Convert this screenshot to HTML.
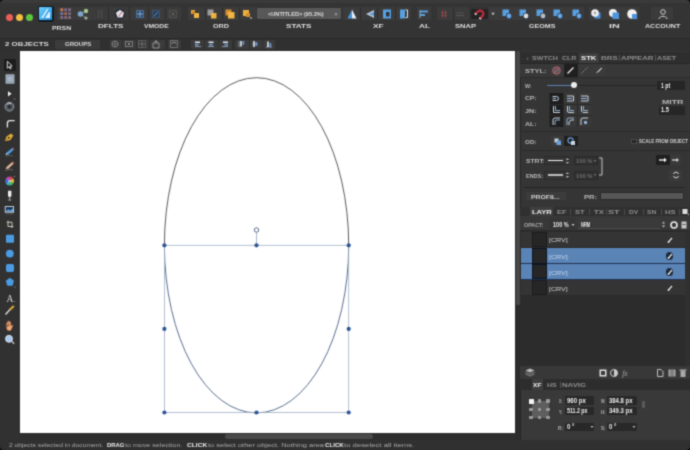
<!DOCTYPE html>
<html><head><meta charset="utf-8">
<style>
*{margin:0;padding:0;box-sizing:border-box}
html,body{width:690px;height:450px;overflow:hidden;background:#2f2f2f;font-family:"Liberation Sans",sans-serif;color:#ddd;position:relative}
.a{position:absolute}
.t{position:absolute;white-space:nowrap;line-height:1}
</style></head><body>

<svg width="0" height="0" style="position:absolute"><filter id="bl" x="0" y="0" width="100%" height="100%" color-interpolation-filters="sRGB"><feConvolveMatrix order="3" kernelMatrix="0.03240 0.11520 0.03240 0.11520 0.40960 0.11520 0.03240 0.11520 0.03240" edgeMode="duplicate" preserveAlpha="true"/></filter></svg>
<div id="wrap" style="position:absolute;left:0;top:0;width:690px;height:450px;overflow:hidden;filter:url(#bl)">
<div class="a" style="left:0px;top:0px;width:690px;height:38px;background:#343434;"></div>
<div class="a" style="left:0px;top:38px;width:690px;height:1px;background:#292929;"></div>
<div class="a" style="left:0px;top:39px;width:690px;height:12px;background:#303030;"></div>
<div class="a" style="left:0px;top:0px;width:690px;height:2.5px;background:#3a3a3a;"></div>
<div class="a" style="left:56.9px;top:7.3px;width:35.00000000000001px;height:12.3px;background:#3b3b3b;border-radius:1px"></div>
<div class="a" style="left:90.8px;top:7.3px;width:37.7px;height:12.3px;background:#3b3b3b;border-radius:1px"></div>
<div class="a" style="left:131.4px;top:7.3px;width:50.0px;height:12.3px;background:#3b3b3b;border-radius:1px"></div>
<div class="a" style="left:188px;top:7.3px;width:68px;height:12.3px;background:#3b3b3b;border-radius:1px"></div>
<div class="a" style="left:342.5px;top:7.3px;width:68.5px;height:12.3px;background:#3b3b3b;border-radius:1px"></div>
<div class="a" style="left:416.5px;top:7.3px;width:14.699999999999989px;height:12.3px;background:#3b3b3b;border-radius:1px"></div>
<div class="a" style="left:437px;top:7.3px;width:31.5px;height:12.3px;background:#3b3b3b;border-radius:1px"></div>
<div class="a" style="left:488.5px;top:7.3px;width:11.5px;height:12.3px;background:#3b3b3b;border-radius:1px"></div>
<div class="a" style="left:497px;top:7.3px;width:86.60000000000002px;height:12.3px;background:#3b3b3b;border-radius:1px"></div>
<div class="a" style="left:588.7px;top:7.3px;width:50.799999999999955px;height:12.3px;background:#3b3b3b;border-radius:1px"></div>
<div class="a" style="left:651px;top:7.3px;width:22px;height:12.3px;background:#3b3b3b;border-radius:1px"></div>
<div class="a" style="left:6.1px;top:13.5px;width:7px;height:7px;border-radius:50%;background:#ec5f58"></div>
<div class="a" style="left:16.1px;top:13.5px;width:7px;height:7px;border-radius:50%;background:#f4be41"></div>
<div class="a" style="left:25.9px;top:13.5px;width:7px;height:7px;border-radius:50%;background:#5ec73f"></div>
<div class="a" style="left:37.6px;top:5.6px;width:16.2px;height:16.2px;background:#141b24;border-radius:2px"></div>
<svg class="a" style="left:39px;top:7px;" width="13" height="13" viewBox="0 0 13 13"><defs><linearGradient id="ag" x1="0" y1="0" x2="1" y2="1"><stop offset="0" stop-color="#6fd0fb"/><stop offset="1" stop-color="#1f8fe3"/></linearGradient></defs><rect width="13" height="13" rx="1" fill="url(#ag)"/><path d="M2,11L8,2L9.5,2L4,11Z M6,11L10,5L11,5L11,11Z" fill="#fff" opacity="0.85"/></svg>
<svg class="a" style="left:60.4px;top:8.1px;" width="12" height="12" viewBox="0 0 12 12"><rect x="0.3" y="0.3" width="2.9" height="2.9" rx="0.5" fill="#c97a4a"/><rect x="4.2" y="0.3" width="2.9" height="2.9" rx="0.5" fill="#7e6a86"/><rect x="8.1" y="0.3" width="2.9" height="2.9" rx="0.5" fill="#7e6a86"/><rect x="0.3" y="4.2" width="2.9" height="2.9" rx="0.5" fill="#6f7aa6"/><rect x="4.2" y="4.2" width="2.9" height="2.9" rx="0.5" fill="#a86a5a"/><rect x="8.1" y="4.2" width="2.9" height="2.9" rx="0.5" fill="#7e6a86"/><rect x="0.3" y="8.1" width="2.9" height="2.9" rx="0.5" fill="#7a6a8a"/><rect x="4.2" y="8.1" width="2.9" height="2.9" rx="0.5" fill="#8a6674"/><rect x="8.1" y="8.1" width="2.9" height="2.9" rx="0.5" fill="#7e6a86"/></svg>
<svg class="a" style="left:77.0px;top:7.5px;" width="12" height="12" viewBox="0 0 12 12"><line x1="3.5" y1="6" x2="9" y2="3" stroke="#7a9a7a" stroke-width="0.8"/><line x1="3.5" y1="6" x2="9" y2="10" stroke="#7a9a7a" stroke-width="0.8"/><circle cx="3.5" cy="6" r="2.8" fill="#7ea3c9"/><circle cx="9" cy="3" r="2.2" fill="#a9c98f"/><circle cx="9" cy="10" r="1.6" fill="#9fb3a0"/></svg>
<svg class="a" style="left:95.0px;top:7.5px;" width="12" height="12" viewBox="0 0 12 12"><rect x="3" y="2" width="1.5" height="8" fill="#4a4a4a"/><rect x="6" y="2" width="1.5" height="8" fill="#4a4a4a"/></svg>
<svg class="a" style="left:113.5px;top:7.5px;" width="12" height="12" viewBox="0 0 12 12"><circle cx="6" cy="6" r="5.3" fill="#232a36"/><path d="M6,1.8L10.1,4.8L8.5,9.6H3.5L1.9,4.8Z" fill="#dfe4ec"/><path d="M4.2,8.6L8.2,3.8" stroke="#d97f78" stroke-width="1.1"/></svg>
<svg class="a" style="left:134.0px;top:7.5px;" width="12" height="12" viewBox="0 0 12 12"><rect x="2.5" y="2.5" width="7" height="7" fill="#2d4a6e"/><rect x="2.5" y="2.5" width="7" height="7" fill="none" stroke="#6fa3dc" stroke-width="0.8" stroke-dasharray="1,0.8"/><path d="M6,3V9M3,6H9" stroke="#9cc0e8" stroke-width="0.8"/></svg>
<svg class="a" style="left:150.0px;top:7.5px;" width="12" height="12" viewBox="0 0 12 12"><rect x="2.5" y="2.5" width="7" height="7" fill="#2a3e58"/><rect x="2.5" y="2.5" width="7" height="7" fill="none" stroke="#4e78a8" stroke-width="0.8" stroke-dasharray="1,0.8"/><path d="M4,8L8,4" stroke="#6a90c0" stroke-width="1"/></svg>
<svg class="a" style="left:167.0px;top:7.5px;" width="12" height="12" viewBox="0 0 12 12"><rect x="2.5" y="2.5" width="7" height="7" fill="none" stroke="#707070" stroke-width="0.8" stroke-dasharray="1,0.8"/><path d="M4,4L8,8M8,4L4,8" stroke="#6a6a6a" stroke-width="0.8"/></svg>
<div class="a" style="left:108px;top:7.3px;width:0.7px;height:12.3px;background:#2d2d2d;"></div>
<div class="a" style="left:148px;top:7.3px;width:0.7px;height:12.3px;background:#2d2d2d;"></div>
<div class="a" style="left:164.5px;top:7.3px;width:0.7px;height:12.3px;background:#2d2d2d;"></div>
<div class="a" style="left:205px;top:7.3px;width:0.7px;height:12.3px;background:#2d2d2d;"></div>
<div class="a" style="left:222px;top:7.3px;width:0.7px;height:12.3px;background:#2d2d2d;"></div>
<div class="a" style="left:238.5px;top:7.3px;width:0.7px;height:12.3px;background:#2d2d2d;"></div>
<div class="a" style="left:359.5px;top:7.3px;width:0.7px;height:12.3px;background:#2d2d2d;"></div>
<div class="a" style="left:377px;top:7.3px;width:0.7px;height:12.3px;background:#2d2d2d;"></div>
<div class="a" style="left:394.5px;top:7.3px;width:0.7px;height:12.3px;background:#2d2d2d;"></div>
<div class="a" style="left:453px;top:7.3px;width:0.7px;height:12.3px;background:#2d2d2d;"></div>
<svg class="a" style="left:189.0px;top:7.5px;" width="12" height="12" viewBox="0 0 12 12"><rect x="2" y="2" width="4" height="4" fill="#e9a838"/><rect x="5" y="5" width="5" height="5" fill="#f0b445"/><rect x="3" y="3" width="3" height="3" fill="#c98a2e"/></svg>
<svg class="a" style="left:206.0px;top:7.5px;" width="12" height="12" viewBox="0 0 12 12"><rect x="1.5" y="1.5" width="6" height="6" fill="#9c9c9c"/><rect x="5" y="5" width="5.5" height="5.5" fill="#efb43f"/></svg>
<svg class="a" style="left:224.0px;top:7.5px;" width="12" height="12" viewBox="0 0 12 12"><rect x="1.5" y="1.5" width="6" height="6" fill="#d88f30"/><rect x="4" y="4" width="6.5" height="6.5" fill="#f2b443"/></svg>
<svg class="a" style="left:241.0px;top:7.5px;" width="12" height="12" viewBox="0 0 12 12"><rect x="2" y="2" width="6" height="6" fill="#efb040"/><rect x="5" y="5" width="4" height="4" fill="#d3902f"/><rect x="9" y="9" width="2" height="2" fill="#888"/></svg>
<div class="a" style="left:257px;top:7.8px;width:84.3px;height:11.7px;background:#585858;border-radius:1px"></div>
<svg class="a" style="left:268.3px;top:9.46px;overflow:visible" width="55.69999999999999" height="8.68"><text x="0" y="6.541" textLength="55.69999999999999" lengthAdjust="spacingAndGlyphs" font-family="Liberation Sans" font-size="6.2" font-weight="bold" fill="#dcdcdc">&lt;UNTITLED&gt; (95.3%)</text></svg>
<div class="t" style="left:336px;top:13.8px;font-size:6px;color:#bbb;font-weight:normal;transform:translate(-50%,-50%);font-family:"Liberation Sans",sans-serif;">×</div>
<svg class="a" style="left:346.0px;top:7.5px;" width="12" height="12" viewBox="0 0 12 12"><path d="M6,1.5L1.5,10.5H6Z" fill="#4a96dc"/><path d="M6,1.5L10.5,10.5H6Z" fill="#e8eef5"/></svg>
<svg class="a" style="left:364.0px;top:7.5px;" width="12" height="12" viewBox="0 0 12 12"><path d="M10,2L2,6L10,10Z" fill="#b8c8d8"/><path d="M10,4L5,6L10,8Z" fill="#5b9bd8"/></svg>
<svg class="a" style="left:381.0px;top:7.5px;" width="12" height="12" viewBox="0 0 12 12"><rect x="2" y="1.5" width="8" height="9" fill="#58a0e0"/><rect x="5" y="4" width="3.5" height="4.5" fill="#2c3440"/></svg>
<svg class="a" style="left:398.0px;top:7.5px;" width="12" height="12" viewBox="0 0 12 12"><rect x="2" y="1.5" width="5" height="9" fill="#58a0e0"/><path d="M7.5,2H9.5V9.5H7.5" stroke="#e0e6ee" stroke-width="1" fill="none"/></svg>
<svg class="a" style="left:418.0px;top:7.5px;" width="12" height="12" viewBox="0 0 12 12"><rect x="2" y="2.5" width="8" height="2" fill="#5aa0e0"/><rect x="2" y="6" width="5" height="2" fill="#5aa0e0"/><rect x="1.5" y="2" width="1" height="8" fill="#8ab"/></svg>
<svg class="a" style="left:438.0px;top:7.5px;" width="12" height="12" viewBox="0 0 12 12"><path d="M4.5,2.5V9.5M7.5,2.5V9.5" stroke="#a8404a" stroke-width="1"/><path d="M3,4.5H9M3,7.5H9" stroke="#7a4a50" stroke-width="0.8"/></svg>
<svg class="a" style="left:454.0px;top:7.5px;" width="12" height="12" viewBox="0 0 12 12"><path d="M2,5H10M2,7.5H10" stroke="#555" stroke-width="1"/></svg>
<div class="a" style="left:471px;top:8.5px;width:17px;height:10px;background:#232323;border-radius:1px"></div>
<svg class="a" style="left:473.5px;top:7.5px;" width="12" height="12" viewBox="0 0 12 12"><g transform="rotate(225 6 6)"><path d="M2.8,3V6.2A3.2,3.2 0 0 0 9.2,6.2V3" fill="none" stroke="#c02a3a" stroke-width="2.2"/><path d="M2.8,2.2V3.6M9.2,2.2V3.6" stroke="#e8e8e8" stroke-width="2.2"/></g></svg>
<svg class="a" style="left:490.5px;top:11.5px;" width="4" height="4" viewBox="0 0 4 4"><path d="M0.3,0.8L2,3.2L3.7,0.8Z" fill="#c8c8c8"/></svg>
<svg class="a" style="left:501.0px;top:7.5px;" width="12" height="12" viewBox="0 0 12 12"><rect x="1.5" y="1.5" width="6.5" height="6.5" fill="#5aa0e0"/><circle cx="8" cy="8" r="3.2" fill="#2a3a50"/><circle cx="8" cy="8" r="2.4" fill="#6aa7e3"/></svg>
<svg class="a" style="left:518.0px;top:7.5px;" width="12" height="12" viewBox="0 0 12 12"><rect x="1.5" y="1.5" width="6.5" height="6.5" fill="#5aa0e0"/><circle cx="8" cy="8" r="3.2" fill="#2a3a50"/><circle cx="8" cy="8" r="2.4" fill="#ddd"/></svg>
<svg class="a" style="left:535.0px;top:7.5px;" width="12" height="12" viewBox="0 0 12 12"><rect x="1.5" y="1.5" width="6.5" height="6.5" fill="#5aa0e0"/><circle cx="8" cy="8" r="3.2" fill="#2a3a50"/><circle cx="8" cy="8" r="2.4" fill="#bbb"/></svg>
<svg class="a" style="left:552.0px;top:7.5px;" width="12" height="12" viewBox="0 0 12 12"><rect x="1.5" y="1.5" width="6.5" height="6.5" fill="#5aa0e0"/><circle cx="8" cy="8" r="3.2" fill="#2a3a50"/><circle cx="8" cy="8" r="2.4" fill="#6aa7e3"/></svg>
<svg class="a" style="left:571.0px;top:7.5px;" width="12" height="12" viewBox="0 0 12 12"><rect x="1.5" y="1.5" width="6.5" height="6.5" fill="#5aa0e0"/><circle cx="8" cy="8" r="3.2" fill="#2a3a50"/><circle cx="8" cy="8" r="2.4" fill="#6aa7e3"/></svg>
<svg class="a" style="left:590.0px;top:7.5px;" width="12" height="12" viewBox="0 0 12 12"><rect x="4.5" y="4.5" width="6" height="6" fill="#4a8fd5"/><circle cx="5" cy="5" r="3.8" fill="#f0f0f0"/><circle cx="5" cy="5" r="1.4" fill="#aaa"/></svg>
<svg class="a" style="left:608.0px;top:7.5px;" width="12" height="12" viewBox="0 0 12 12"><circle cx="5" cy="5" r="4" fill="#f0f0f0"/><rect x="4.5" y="4.5" width="6.5" height="6.5" fill="#4d95dc"/></svg>
<svg class="a" style="left:625.5px;top:7.5px;" width="12" height="12" viewBox="0 0 12 12"><circle cx="6" cy="6" r="4.8" fill="#f2f2f2"/><path d="M6,6H11V11H6Z" fill="#4d95dc"/></svg>
<svg class="a" style="left:656.5px;top:7.5px;" width="12" height="12" viewBox="0 0 12 12"><circle cx="6" cy="4" r="2.3" fill="none" stroke="#cfcfcf" stroke-width="1"/><path d="M2,11C2,7.5 10,7.5 10,11" fill="none" stroke="#cfcfcf" stroke-width="1"/></svg>
<svg class="a" style="left:52.2px;top:23.26px;overflow:visible" width="19.099999999999994" height="8.68"><text x="0" y="6.541" textLength="19.099999999999994" lengthAdjust="spacingAndGlyphs" font-family="Liberation Sans" font-size="6.2" font-weight="bold" fill="#dedede">PRSN</text></svg>
<svg class="a" style="left:98px;top:20.96px;overflow:visible" width="25.5" height="8.68"><text x="0" y="6.541" textLength="25.5" lengthAdjust="spacingAndGlyphs" font-family="Liberation Sans" font-size="6.2" font-weight="bold" fill="#dedede">DFLTS</text></svg>
<svg class="a" style="left:144.3px;top:20.96px;overflow:visible" width="24.69999999999999" height="8.68"><text x="0" y="6.541" textLength="24.69999999999999" lengthAdjust="spacingAndGlyphs" font-family="Liberation Sans" font-size="6.2" font-weight="bold" fill="#dedede">VMODE</text></svg>
<svg class="a" style="left:212.5px;top:20.96px;overflow:visible" width="15.900000000000006" height="8.68"><text x="0" y="6.541" textLength="15.900000000000006" lengthAdjust="spacingAndGlyphs" font-family="Liberation Sans" font-size="6.2" font-weight="bold" fill="#dedede">ORD</text></svg>
<svg class="a" style="left:286.4px;top:20.96px;overflow:visible" width="25.5" height="8.68"><text x="0" y="6.541" textLength="25.5" lengthAdjust="spacingAndGlyphs" font-family="Liberation Sans" font-size="6.2" font-weight="bold" fill="#dedede">STATS</text></svg>
<svg class="a" style="left:372.8px;top:20.96px;overflow:visible" width="10.699999999999989" height="8.68"><text x="0" y="6.541" textLength="10.699999999999989" lengthAdjust="spacingAndGlyphs" font-family="Liberation Sans" font-size="6.2" font-weight="bold" fill="#dedede">XF</text></svg>
<svg class="a" style="left:418.8px;top:20.96px;overflow:visible" width="11.099999999999966" height="8.68"><text x="0" y="6.541" textLength="11.099999999999966" lengthAdjust="spacingAndGlyphs" font-family="Liberation Sans" font-size="6.2" font-weight="bold" fill="#dedede">AL</text></svg>
<svg class="a" style="left:455.2px;top:20.96px;overflow:visible" width="21.0" height="8.68"><text x="0" y="6.541" textLength="21.0" lengthAdjust="spacingAndGlyphs" font-family="Liberation Sans" font-size="6.2" font-weight="bold" fill="#dedede">SNAP</text></svg>
<svg class="a" style="left:528.8px;top:20.96px;overflow:visible" width="26.40000000000009" height="8.68"><text x="0" y="6.541" textLength="26.40000000000009" lengthAdjust="spacingAndGlyphs" font-family="Liberation Sans" font-size="6.2" font-weight="bold" fill="#dedede">GEOMS</text></svg>
<svg class="a" style="left:608.5px;top:20.96px;overflow:visible" width="10.799999999999955" height="8.68"><text x="0" y="6.541" textLength="10.799999999999955" lengthAdjust="spacingAndGlyphs" font-family="Liberation Sans" font-size="6.2" font-weight="bold" fill="#dedede">IN</text></svg>
<svg class="a" style="left:644.7px;top:20.96px;overflow:visible" width="35.19999999999993" height="8.68"><text x="0" y="6.541" textLength="35.19999999999993" lengthAdjust="spacingAndGlyphs" font-family="Liberation Sans" font-size="6.2" font-weight="bold" fill="#dedede">ACCOUNT</text></svg>
<svg class="a" style="left:4.8px;top:40.2px;overflow:visible" width="43.800000000000004" height="8.399999999999999"><text x="0" y="6.329999999999999" textLength="43.800000000000004" lengthAdjust="spacingAndGlyphs" font-family="Liberation Sans" font-size="6" font-weight="bold" fill="#dadada">2 OBJECTS</text></svg>
<div class="a" style="left:55px;top:39.6px;width:44.7px;height:9.9px;background:#3b3b3b;border-radius:1px"></div>
<svg class="a" style="left:65.4px;top:40.2px;overflow:visible" width="26.299999999999997" height="8.399999999999999"><text x="0" y="6.329999999999999" textLength="26.299999999999997" lengthAdjust="spacingAndGlyphs" font-family="Liberation Sans" font-size="6" font-weight="bold" fill="#dadada">GROUPS</text></svg>
<div class="a" style="left:109.5px;top:39.5px;width:55.19999999999999px;height:9.6px;background:#3b3b3b;border-radius:1px"></div>
<div class="a" style="left:167.8px;top:39.5px;width:13.5px;height:9.6px;background:#3b3b3b;border-radius:1px"></div>
<div class="a" style="left:190.5px;top:39.5px;width:41.5px;height:9.6px;background:#3b3b3b;border-radius:1px"></div>
<div class="a" style="left:235px;top:39.5px;width:39.5px;height:9.6px;background:#3b3b3b;border-radius:1px"></div>
<div class="a" style="left:122.3px;top:39.5px;width:0.7px;height:9.6px;background:#2e2e2e;"></div>
<div class="a" style="left:135.6px;top:39.5px;width:0.7px;height:9.6px;background:#2e2e2e;"></div>
<div class="a" style="left:149px;top:39.5px;width:0.7px;height:9.6px;background:#2e2e2e;"></div>
<div class="a" style="left:204.3px;top:39.5px;width:0.7px;height:9.6px;background:#2e2e2e;"></div>
<div class="a" style="left:218px;top:39.5px;width:0.7px;height:9.6px;background:#2e2e2e;"></div>
<svg class="a" style="left:109.0px;top:38.3px;" width="12" height="12" viewBox="0 0 12 12"><circle cx="6" cy="6" r="3" fill="none" stroke="#8a8a8a" stroke-width="0.8"/><path d="M6,2.5V9.5M2.5,6H9.5" stroke="#8a8a8a" stroke-width="0.6"/></svg>
<svg class="a" style="left:123.0px;top:38.3px;" width="12" height="12" viewBox="0 0 12 12"><rect x="2.5" y="3.5" width="7" height="5" fill="none" stroke="#8a8a8a" stroke-width="0.8"/><rect x="5" y="5" width="2" height="2" fill="#8a8a8a"/></svg>
<svg class="a" style="left:136.0px;top:38.3px;" width="12" height="12" viewBox="0 0 12 12"><rect x="2.5" y="2.5" width="7" height="7" fill="none" stroke="#8a8a8a" stroke-width="0.7" stroke-dasharray="1,0.7"/><path d="M6,3V9M3,6H9" stroke="#8a8a8a" stroke-width="0.6"/></svg>
<svg class="a" style="left:150.0px;top:38.3px;" width="12" height="12" viewBox="0 0 12 12"><path d="M3,5H9V10H3Z" fill="none" stroke="#aaa" stroke-width="0.8"/><path d="M6,2V5M4.5,3.5H7.5" stroke="#aaa" stroke-width="0.7"/></svg>
<svg class="a" style="left:168.0px;top:38.3px;" width="12" height="12" viewBox="0 0 12 12"><rect x="2.5" y="2.5" width="7" height="7" fill="none" stroke="#888" stroke-width="0.7"/><path d="M4,6A2,2 0 1 1 8,6" fill="none" stroke="#aaa" stroke-width="0.8"/></svg>
<div class="a" style="left:248.5px;top:39.5px;width:0.7px;height:9.6px;background:#2e2e2e;"></div>
<div class="a" style="left:261.8px;top:39.5px;width:0.7px;height:9.6px;background:#2e2e2e;"></div>
<svg class="a" style="left:191.5px;top:38.3px;" width="12" height="12" viewBox="0 0 12 12"><path d="M3,8.5H9" stroke="#9aa8b8" stroke-width="0.8"/><rect x="3" y="3.5" width="5" height="1.6" fill="#dfe6ee"/><rect x="3" y="6" width="3.5" height="1.6" fill="#6d9ad0"/></svg>
<svg class="a" style="left:205.0px;top:38.3px;" width="12" height="12" viewBox="0 0 12 12"><path d="M3,8.5H9" stroke="#9aa8b8" stroke-width="0.8"/><rect x="3.5" y="3.5" width="5" height="1.6" fill="#dfe6ee"/><rect x="4.2" y="6" width="3.6" height="1.6" fill="#6d9ad0"/></svg>
<svg class="a" style="left:219.0px;top:38.3px;" width="12" height="12" viewBox="0 0 12 12"><path d="M3,8.5H9" stroke="#9aa8b8" stroke-width="0.8"/><rect x="4" y="3.5" width="5" height="1.6" fill="#dfe6ee"/><rect x="5.5" y="6" width="3.5" height="1.6" fill="#6d9ad0"/></svg>
<svg class="a" style="left:236.0px;top:38.3px;" width="12" height="12" viewBox="0 0 12 12"><path d="M3,3V9" stroke="#9aa8b8" stroke-width="0.8"/><rect x="4.2" y="3" width="1.6" height="5.5" fill="#dfe6ee"/><rect x="6.6" y="3" width="1.6" height="3.8" fill="#6d9ad0"/></svg>
<svg class="a" style="left:249.0px;top:38.3px;" width="12" height="12" viewBox="0 0 12 12"><path d="M3,6H9" stroke="#9aa8b8" stroke-width="0.6"/><rect x="4.2" y="3" width="1.6" height="6" fill="#dfe6ee"/><rect x="6.6" y="4" width="1.6" height="4" fill="#6d9ad0"/></svg>
<svg class="a" style="left:262.5px;top:38.3px;" width="12" height="12" viewBox="0 0 12 12"><path d="M3,9H9" stroke="#9aa8b8" stroke-width="0.8"/><rect x="4.2" y="3.5" width="1.6" height="5.5" fill="#dfe6ee"/><rect x="6.6" y="5" width="1.6" height="4" fill="#6d9ad0"/></svg>
<div class="a" style="left:0px;top:51px;width:20px;height:389px;background:#313131;"></div>
<div class="a" style="left:4px;top:58.7px;width:12px;height:12px;background:#1c1c1c;border-radius:1px"></div>
<svg class="a" style="left:0;top:0" width="20" height="450" viewBox="0 0 20 450">
<path d="M7.3,61.3V68.3L9,66.6L10.3,69L11.2,68.5L10,66.2L12.2,66Z" fill="none" stroke="#e6e6e6" stroke-width="0.9" stroke-linejoin="round"/>
<rect x="6" y="74.8" width="8" height="8.4" fill="#8a9aad" stroke="#c4ceda" stroke-width="0.7"/>
<rect x="7.5" y="76.5" width="5" height="5" fill="#a8b6c6"/>
<path d="M8,91.2V96.4L11.6,93.8Z" fill="#f2f2f2"/><circle cx="14.5" cy="99" r="0.7" fill="#888"/>
<circle cx="9.4" cy="106.7" r="4.4" fill="#50545c" stroke="#9aa2ae" stroke-width="0.9"/><circle cx="9.4" cy="106.7" r="1.5" fill="#1e2228"/><path d="M6.8,104.5A3.2,3.2 0 0 1 11,103.6" stroke="#e0e4ea" stroke-width="0.9" fill="none"/>
<path d="M7.4,127.5V123.2Q7.4,120.6 10,120.6H14.6" fill="none" stroke="#e8e8e8" stroke-width="1.3"/>
<path d="M4.8,141.2L6.5,136.5L11,133.5L13.3,135.6L10.4,140Z" fill="#e1ad3e"/><circle cx="8.8" cy="137.8" r="1" fill="#4a3410"/><path d="M4.8,141.2L7.8,138.6" stroke="#5a4010" stroke-width="0.5"/>
<path d="M5.5,155L6.5,152.8L12.8,147.4L14.4,149L8.3,154.8Z" fill="#4f9de2"/><path d="M12.8,147.4L14.4,149L13.6,149.8L12,148.2Z" fill="#b03838"/><path d="M5.5,156.5Q9,154.5 13,156" stroke="#666" stroke-width="0.8" fill="none"/><path d="M5.5,155L6.5,152.8L7.3,154Z" fill="#ddd"/>
<path d="M5.5,169L6.8,166.8L12.8,161.4L14.3,163L8.3,168.8Z" fill="#e0b898"/><path d="M12.8,161.4L14.3,163L13.5,163.8L12,162.2Z" fill="#a83838"/><path d="M5.2,170.6Q9,168.5 13,170" stroke="#777" stroke-width="0.8" fill="none"/>
<path d="M9.6,181L9.6,176.6A4.4,4.4 0 0 1 13.4,178.8Z" fill="#e84a4a"/><path d="M9.6,181L13.4,178.8A4.4,4.4 0 0 1 13.4,183.2Z" fill="#e8c83a"/><path d="M9.6,181L13.4,183.2A4.4,4.4 0 0 1 9.6,185.4Z" fill="#48c060"/><path d="M9.6,181L9.6,185.4A4.4,4.4 0 0 1 5.8,183.2Z" fill="#3ab8c8"/><path d="M9.6,181L5.8,183.2A4.4,4.4 0 0 1 5.8,178.8Z" fill="#4a68e0"/><path d="M9.6,181L5.8,178.8A4.4,4.4 0 0 1 9.6,176.6Z" fill="#c048c8"/><circle cx="9.6" cy="181" r="1.6" fill="#d8d8d8" opacity="0.7"/><circle cx="14.3" cy="176.5" r="0.6" fill="#aaa"/>
<path d="M8,190.7H11.4V195.5Q11.4,197 9.7,197Q8,197 8,195.5Z" fill="#eeeeee"/><path d="M9.7,197V199.6M8.2,200H11.2" stroke="#cccccc" stroke-width="0.8"/>
<rect x="4.8" y="206.2" width="9.2" height="6.4" fill="#e8eef4"/><rect x="5.6" y="207" width="7.6" height="4.8" fill="#1c3558"/><path d="M5.6,211.8L8,209.3L10,210.5L13.2,208.4V211.8Z" fill="#6aaae6"/><path d="M5.5,214H13.5" stroke="#666" stroke-width="0.6"/>
<path d="M8,220.8V226.5H13.4M6.7,222.2H12V228" fill="none" stroke="#d8d4c8" stroke-width="0.9"/>
<rect x="6" y="234.8" width="8" height="8" rx="0.8" fill="#4b9be3"/>
<circle cx="9.8" cy="253.6" r="3.9" fill="#4b9be3"/>
<rect x="6" y="264" width="8" height="8" rx="1.8" fill="#4b9be3"/>
<path d="M9.9,277.8L14,280.8L12.5,285.8H7.3L5.8,280.8Z" fill="#4b9be3"/><circle cx="15" cy="287" r="0.6" fill="#999"/>
<text x="10" y="301.5" font-size="9.5" text-anchor="middle" fill="#d6d6d6" font-family="Liberation Serif">A</text><circle cx="14.8" cy="301.5" r="0.5" fill="#999"/>
<path d="M5.5,314.5L10.5,309" stroke="#e0e0e0" stroke-width="1.3"/><path d="M9.8,309.8L13.8,306" stroke="#d8a840" stroke-width="2.2"/><path d="M11,310.8L12.8,309" stroke="#6a4a10" stroke-width="0.6"/>
<path d="M6.5,327V323.5Q6.5,322.5 7.4,322.9V325.5M7.4,325V321.8Q7.4,321 8.4,321.4V325M8.4,325V321.2Q9,320.5 9.6,321.2V325.2M9.6,325.2V322Q10.4,321.4 10.8,322.2V326.2L12,325Q13.2,324.8 12.8,326L10.8,330.5H7.8Q6.5,329.4 6.5,327Z" fill="#f0a878" stroke="#c07048" stroke-width="0.35"/>
<circle cx="9" cy="338.8" r="3.5" fill="#a9c8ec" stroke="#e8f0f8" stroke-width="0.8"/><path d="M11.5,341.3L14.2,343.8" stroke="#c8c8c8" stroke-width="1.3"/>
</svg>
<div class="a" style="left:20px;top:51px;width:494.5px;height:382.3px;background:#ffffff;"></div>
<div class="a" style="left:20px;top:433px;width:495px;height:7px;background:#2e2e2e;"></div>
<div class="a" style="left:225px;top:434.3px;width:148px;height:4.7px;background:#4a4a4a;border-radius:2.3px"></div>
<svg class="a" style="left:0;top:0" width="690" height="450" viewBox="0 0 690 450">
  <path d="M164.4,245.3 A92.15,167.6 0 0 1 348.7,245.3" fill="none" stroke="#525252" stroke-width="0.95"/>
  <path d="M164.4,245.3 A92.15,167.6 0 0 0 348.7,245.3" fill="none" stroke="#5a6f8f" stroke-width="1"/>
  <rect x="164.4" y="245.3" width="184.3" height="167.2" fill="none" stroke="#9fb0c6" stroke-width="0.8"/>
  <line x1="256.5" y1="245.3" x2="256.5" y2="232.3" stroke="#8898b0" stroke-width="0.7"/>
  <circle cx="256.5" cy="230" r="2.2" fill="#fff" stroke="#4a5f82" stroke-width="0.9"/>
  <g fill="#2d5594">
    <circle cx="164.4" cy="245.3" r="2.1"/><circle cx="256.5" cy="245.3" r="2.1"/><circle cx="348.7" cy="245.3" r="2.1"/>
    <circle cx="164.4" cy="328.9" r="2.1"/><circle cx="348.7" cy="328.9" r="2.1"/>
    <circle cx="164.4" cy="412.5" r="2.1"/><circle cx="256.5" cy="412.5" r="2.1"/><circle cx="348.7" cy="412.5" r="2.1"/>
  </g>
</svg>
<div class="a" style="left:515px;top:51px;width:175px;height:389px;background:#353535;"></div>
<div class="a" style="left:515px;top:51px;width:6px;height:389px;background:#2c2c2c;"></div>
<div class="a" style="left:516px;top:51px;width:3.5px;height:254px;background:#474747;border-radius:1px"></div>
<div class="a" style="left:520px;top:51px;width:1px;height:389px;background:#262626;"></div>
<div class="a" style="left:520px;top:52px;width:170px;height:11px;background:#2e2e2e;"></div>
<div class="a" style="left:520px;top:63px;width:170px;height:0.6px;background:#262626;"></div>
<div class="a" style="left:579px;top:52.5px;width:19.5px;height:10.5px;background:#3e3e3e;border-radius:1px 1px 0 0"></div>
<svg class="a" style="left:525.5px;top:53.599999999999994px;overflow:visible" width="3.0" height="8.399999999999999"><text x="0" y="6.329999999999999" textLength="3.0" lengthAdjust="spacingAndGlyphs" font-family="Liberation Sans" font-size="6" font-weight="normal" fill="#777">‹</text></svg>
<svg class="a" style="left:532.3px;top:53.459999999999994px;overflow:visible" width="25.90000000000009" height="8.68"><text x="0" y="6.541" textLength="25.90000000000009" lengthAdjust="spacingAndGlyphs" font-family="Liberation Sans" font-size="6.2" font-weight="bold" fill="#8e8e8e">SWTCH</text></svg>
<svg class="a" style="left:561.9px;top:53.459999999999994px;overflow:visible" width="14.300000000000068" height="8.68"><text x="0" y="6.541" textLength="14.300000000000068" lengthAdjust="spacingAndGlyphs" font-family="Liberation Sans" font-size="6.2" font-weight="bold" fill="#8e8e8e">CLR</text></svg>
<svg class="a" style="left:581px;top:53.459999999999994px;overflow:visible" width="15.399999999999977" height="8.68"><text x="0" y="6.541" textLength="15.399999999999977" lengthAdjust="spacingAndGlyphs" font-family="Liberation Sans" font-size="6.2" font-weight="bold" fill="#f4f4f4">STK</text></svg>
<svg class="a" style="left:601.3px;top:53.459999999999994px;overflow:visible" width="16.700000000000045" height="8.68"><text x="0" y="6.541" textLength="16.700000000000045" lengthAdjust="spacingAndGlyphs" font-family="Liberation Sans" font-size="6.2" font-weight="bold" fill="#8e8e8e">BRS</text></svg>
<div class="a" style="left:619px;top:54.5px;width:0.6px;height:6px;background:#555;"></div>
<svg class="a" style="left:620.5px;top:53.459999999999994px;overflow:visible" width="32.5" height="8.68"><text x="0" y="6.541" textLength="32.5" lengthAdjust="spacingAndGlyphs" font-family="Liberation Sans" font-size="6.2" font-weight="bold" fill="#8e8e8e">APPEAR</text></svg>
<div class="a" style="left:654.5px;top:54.5px;width:0.6px;height:6px;background:#555;"></div>
<svg class="a" style="left:656.7px;top:53.459999999999994px;overflow:visible" width="19.0" height="8.68"><text x="0" y="6.541" textLength="19.0" lengthAdjust="spacingAndGlyphs" font-family="Liberation Sans" font-size="6.2" font-weight="bold" fill="#8e8e8e">ASET</text></svg>
<div class="a" style="left:520px;top:63.5px;width:170px;height:13.5px;background:#383838;"></div>
<div class="a" style="left:520px;top:77px;width:170px;height:0.6px;background:#2c2c2c;"></div>
<svg class="a" style="left:525.4px;top:65.66px;overflow:visible" width="21.600000000000023" height="8.68"><text x="0" y="6.541" textLength="21.600000000000023" lengthAdjust="spacingAndGlyphs" font-family="Liberation Sans" font-size="6.2" font-weight="bold" fill="#b8b8b8">STYL:</text></svg>
<div class="a" style="left:563px;top:64px;width:14.5px;height:12.5px;background:#1f1f1f;"></div>
<div class="a" style="left:549.5px;top:64px;width:14px;height:12.5px;background:#3a3a3a;"></div>
<div class="a" style="left:577.5px;top:64px;width:14px;height:12.5px;background:#3a3a3a;"></div>
<div class="a" style="left:591.5px;top:64px;width:14px;height:12.5px;background:#3a3a3a;"></div>
<svg class="a" style="left:550px;top:64px;" width="13" height="13" viewBox="0 0 13 13"><circle cx="6.5" cy="6.5" r="3.8" fill="#5a5a5a" stroke="#c05a6a" stroke-width="1"/><path d="M4.2,8.8L8.8,4.2" stroke="#c05a6a" stroke-width="1"/></svg>
<svg class="a" style="left:563.5px;top:64px;" width="13" height="13" viewBox="0 0 13 13"><path d="M3.5,9.5L9.5,3.5" stroke="#f0f0f0" stroke-width="1.2"/></svg>
<svg class="a" style="left:577.5px;top:64px;" width="13" height="13" viewBox="0 0 13 13"><path d="M3.5,9.5L9.5,3.5" stroke="#999" stroke-width="1" stroke-dasharray="1.2,1.2"/></svg>
<svg class="a" style="left:591.5px;top:64px;" width="13" height="13" viewBox="0 0 13 13"><path d="M3.5,9.5L6,7L9.5,3.5L10,4.5L6.5,8Z" fill="#d8d8d8"/></svg>
<svg class="a" style="left:525.4px;top:81.06px;overflow:visible" width="6.600000000000023" height="8.68"><text x="0" y="6.541" textLength="6.600000000000023" lengthAdjust="spacingAndGlyphs" font-family="Liberation Sans" font-size="6.2" font-weight="bold" fill="#b8b8b8">W:</text></svg>
<div class="a" style="left:547px;top:84.5px;width:27px;height:1.6px;background:#5b80b2;border-radius:1px"></div>
<div class="a" style="left:574px;top:84.5px;width:83px;height:1.6px;background:#262626;border-radius:1px"></div>
<div class="a" style="left:571.3px;top:82.3px;width:6px;height:6px;border-radius:50%;background:#eeeeee"></div>
<div class="a" style="left:657px;top:80.5px;width:28px;height:9.5px;background:#262626;border-radius:1px"></div>
<svg class="a" style="left:661.3px;top:80.75px;overflow:visible" width="9.100000000000023" height="9.1"><text x="0" y="6.8575" textLength="9.100000000000023" lengthAdjust="spacingAndGlyphs" font-family="Liberation Sans" font-size="6.5" font-weight="bold" fill="#f0f0f0">1 pt</text></svg>
<svg class="a" style="left:525.4px;top:93.46px;overflow:visible" width="11.600000000000023" height="8.68"><text x="0" y="6.541" textLength="11.600000000000023" lengthAdjust="spacingAndGlyphs" font-family="Liberation Sans" font-size="6.2" font-weight="bold" fill="#b8b8b8">CP:</text></svg>
<svg class="a" style="left:525.4px;top:106.46px;overflow:visible" width="11.600000000000023" height="8.68"><text x="0" y="6.541" textLength="11.600000000000023" lengthAdjust="spacingAndGlyphs" font-family="Liberation Sans" font-size="6.2" font-weight="bold" fill="#b8b8b8">JN:</text></svg>
<svg class="a" style="left:525.4px;top:118.86px;overflow:visible" width="11.600000000000023" height="8.68"><text x="0" y="6.541" textLength="11.600000000000023" lengthAdjust="spacingAndGlyphs" font-family="Liberation Sans" font-size="6.2" font-weight="bold" fill="#b8b8b8">AL:</text></svg>
<div class="a" style="left:549.3px;top:92.6px;width:41.8px;height:34.5px;background:#2a2a2a;"></div>
<div class="a" style="left:549.6999999999999px;top:93.0px;width:13.1px;height:10.7px;background:#1e1e1e;"></div>
<svg class="a" style="left:549.8px;top:91.8px;" width="13" height="13" viewBox="0 0 13 13"><path d="M2.5,4.5H6.5A2,2 0 0 1 6.5,8.5H2.5" fill="none" stroke="#c8d4e0" stroke-width="1"/><path d="M2.5,6.5H6" stroke="#8fb0d0" stroke-width="1.2"/></svg>
<div class="a" style="left:563.6299999999999px;top:93.0px;width:13.1px;height:10.7px;background:#393939;"></div>
<svg class="a" style="left:563.7299999999999px;top:91.8px;" width="13" height="13" viewBox="0 0 13 13"><path d="M3,4H9.5V9H3" fill="none" stroke="#c8d4e0" stroke-width="1"/><path d="M3,6.5H8" stroke="#8fb0d0" stroke-width="1.2"/></svg>
<div class="a" style="left:577.56px;top:93.0px;width:13.1px;height:10.7px;background:#393939;"></div>
<svg class="a" style="left:577.66px;top:91.8px;" width="13" height="13" viewBox="0 0 13 13"><path d="M3,4H10V9H3" fill="none" stroke="#c8d4e0" stroke-width="1"/><path d="M3,6.5H8.5" stroke="#8fb0d0" stroke-width="1.2"/></svg>
<div class="a" style="left:549.6999999999999px;top:104.5px;width:13.1px;height:10.7px;background:#1e1e1e;"></div>
<svg class="a" style="left:549.8px;top:103.3px;" width="13" height="13" viewBox="0 0 13 13"><path d="M3.5,3V9.5H10" fill="none" stroke="#c8d4e0" stroke-width="1"/><path d="M5.5,3V7.5H10" fill="none" stroke="#8fb0d0" stroke-width="1"/></svg>
<div class="a" style="left:563.6299999999999px;top:104.5px;width:13.1px;height:10.7px;background:#393939;"></div>
<svg class="a" style="left:563.7299999999999px;top:103.3px;" width="13" height="13" viewBox="0 0 13 13"><path d="M3.5,3V8Q3.5,9.5 5,9.5H10" fill="none" stroke="#c8d4e0" stroke-width="1"/><path d="M5.5,3V7.5H10" fill="none" stroke="#8fb0d0" stroke-width="1"/></svg>
<div class="a" style="left:577.56px;top:104.5px;width:13.1px;height:10.7px;background:#393939;"></div>
<svg class="a" style="left:577.66px;top:103.3px;" width="13" height="13" viewBox="0 0 13 13"><path d="M3.5,3V8L5,9.5H10" fill="none" stroke="#c8d4e0" stroke-width="1"/><path d="M5.5,3V7.5H10" fill="none" stroke="#8fb0d0" stroke-width="1"/></svg>
<div class="a" style="left:549.6999999999999px;top:116.0px;width:13.1px;height:10.7px;background:#1e1e1e;"></div>
<svg class="a" style="left:549.8px;top:114.8px;" width="13" height="13" viewBox="0 0 13 13"><path d="M3,10V5Q3,3 5,3H10" fill="none" stroke="#c8d4e0" stroke-width="1"/><path d="M5,10V6L6,5H10" fill="none" stroke="#8fb0d0" stroke-width="1"/></svg>
<div class="a" style="left:563.6299999999999px;top:116.0px;width:13.1px;height:10.7px;background:#393939;"></div>
<svg class="a" style="left:563.7299999999999px;top:114.8px;" width="13" height="13" viewBox="0 0 13 13"><path d="M3,10V5Q3,3 5,3H10" fill="none" stroke="#8fb0d0" stroke-width="1"/><path d="M5,10V7L7,5H10" fill="none" stroke="#c8d4e0" stroke-width="1"/></svg>
<div class="a" style="left:577.56px;top:116.0px;width:13.1px;height:10.7px;background:#393939;"></div>
<svg class="a" style="left:577.66px;top:114.8px;" width="13" height="13" viewBox="0 0 13 13"><path d="M3,10V5Q3,3 5,3H10" fill="none" stroke="#c8d4e0" stroke-width="1"/><rect x="6" y="6" width="3" height="3" fill="#8fb0d0"/></svg>
<svg class="a" style="left:662px;top:96.66px;overflow:visible" width="21.399999999999977" height="8.68"><text x="0" y="6.541" textLength="21.399999999999977" lengthAdjust="spacingAndGlyphs" font-family="Liberation Sans" font-size="6.2" font-weight="bold" fill="#b8b8b8">MITR</text></svg>
<div class="a" style="left:658.5px;top:105.5px;width:26.5px;height:9px;background:#262626;border-radius:1px"></div>
<svg class="a" style="left:660.6px;top:105.45px;overflow:visible" width="7.7999999999999545" height="9.1"><text x="0" y="6.8575" textLength="7.7999999999999545" lengthAdjust="spacingAndGlyphs" font-family="Liberation Sans" font-size="6.5" font-weight="bold" fill="#f0f0f0">1.5</text></svg>
<div class="a" style="left:520px;top:130.5px;width:170px;height:0.7px;background:#2b2b2b;"></div>
<svg class="a" style="left:525.4px;top:137.35999999999999px;overflow:visible" width="11.600000000000023" height="8.68"><text x="0" y="6.541" textLength="11.600000000000023" lengthAdjust="spacingAndGlyphs" font-family="Liberation Sans" font-size="6.2" font-weight="bold" fill="#b8b8b8">OD:</text></svg>
<div class="a" style="left:551px;top:136px;width:13px;height:9.5px;background:#3a3a3a;"></div>
<div class="a" style="left:564px;top:136px;width:13.5px;height:9.5px;background:#1f1f1f;"></div>
<svg class="a" style="left:551px;top:134.5px;" width="13" height="13" viewBox="0 0 13 13"><rect x="3.5" y="3.5" width="4" height="4" fill="#c8d4e0"/><rect x="5.5" y="5.5" width="4.5" height="4.5" fill="#6a9fd8"/></svg>
<svg class="a" style="left:564.5px;top:134.5px;" width="13" height="13" viewBox="0 0 13 13"><circle cx="5.5" cy="5.5" r="2.6" fill="none" stroke="#6a9fd8" stroke-width="1.1"/><rect x="6" y="6" width="4" height="4" fill="#c8d4e0"/></svg>
<div class="a" style="left:631px;top:138.5px;width:6px;height:5.5px;background:#262626;border:0.5px solid #4a4a4a"></div>
<svg class="a" style="left:638.5px;top:138.28px;overflow:visible" width="48.89999999999998" height="6.4399999999999995"><text x="0" y="4.853" textLength="48.89999999999998" lengthAdjust="spacingAndGlyphs" font-family="Liberation Sans" font-size="4.6" font-weight="bold" fill="#cfcfcf">SCALE FROM OBJECT</text></svg>
<div class="a" style="left:520px;top:149.5px;width:170px;height:0.7px;background:#2b2b2b;"></div>
<svg class="a" style="left:526px;top:156.26px;overflow:visible" width="19" height="8.68"><text x="0" y="6.541" textLength="19" lengthAdjust="spacingAndGlyphs" font-family="Liberation Sans" font-size="6.2" font-weight="bold" fill="#b8b8b8">STRT:</text></svg>
<svg class="a" style="left:526px;top:170.66px;overflow:visible" width="17" height="8.68"><text x="0" y="6.541" textLength="17" lengthAdjust="spacingAndGlyphs" font-family="Liberation Sans" font-size="6.2" font-weight="bold" fill="#b8b8b8">ENDS:</text></svg>
<div class="a" style="left:544px;top:156.1px;width:25px;height:9px;background:#353535;border:0.5px solid #2a2a2a"></div>
<div class="a" style="left:548px;top:160.0px;width:15px;height:1.2px;background:#f2f2f2;"></div>
<svg class="a" style="left:565px;top:156.6px;" width="5" height="8" viewBox="0 0 5 8"><path d="M0.8,3L2.5,1L4.2,3Z M0.8,5L2.5,7L4.2,5Z" fill="#aaa"/></svg>
<div class="a" style="left:573.5px;top:156.1px;width:24.5px;height:9px;background:#303030;border:0.5px solid #2a2a2a"></div>
<svg class="a" style="left:575.6px;top:156.26px;overflow:visible" width="16.399999999999977" height="8.68"><text x="0" y="6.541" textLength="16.399999999999977" lengthAdjust="spacingAndGlyphs" font-family="Liberation Sans" font-size="6.2" font-weight="bold" fill="#6c6c6c">100 %</text></svg>
<svg class="a" style="left:592.5px;top:158.6px;" width="4" height="4" viewBox="0 0 4 4"><path d="M0.5,1L2,3L3.5,1Z" fill="#6c6c6c"/></svg>
<div class="a" style="left:544px;top:170.5px;width:25px;height:9px;background:#353535;border:0.5px solid #2a2a2a"></div>
<div class="a" style="left:548px;top:174.4px;width:15px;height:1.2px;background:#bdbdbd;"></div>
<svg class="a" style="left:565px;top:171px;" width="5" height="8" viewBox="0 0 5 8"><path d="M0.8,3L2.5,1L4.2,3Z M0.8,5L2.5,7L4.2,5Z" fill="#aaa"/></svg>
<div class="a" style="left:573.5px;top:170.5px;width:24.5px;height:9px;background:#303030;border:0.5px solid #2a2a2a"></div>
<svg class="a" style="left:575.6px;top:170.66px;overflow:visible" width="16.399999999999977" height="8.68"><text x="0" y="6.541" textLength="16.399999999999977" lengthAdjust="spacingAndGlyphs" font-family="Liberation Sans" font-size="6.2" font-weight="bold" fill="#6c6c6c">100 %</text></svg>
<svg class="a" style="left:592.5px;top:173px;" width="4" height="4" viewBox="0 0 4 4"><path d="M0.5,1L2,3L3.5,1Z" fill="#6c6c6c"/></svg>
<svg class="a" style="left:598px;top:157px;" width="6" height="20" viewBox="0 0 6 20"><path d="M1,1H4V18H1" fill="none" stroke="#c8c8c8" stroke-width="1"/></svg>
<div class="a" style="left:655.5px;top:155px;width:14.5px;height:9.5px;background:#1f1f1f;"></div>
<svg class="a" style="left:655.5px;top:154px;" width="14" height="12" viewBox="0 0 14 12"><path d="M3,6H10" stroke="#f0f0f0" stroke-width="1.4"/><path d="M8,3.8L10.8,6L8,8.2Z" fill="#f0f0f0"/></svg>
<div class="a" style="left:670px;top:155px;width:11px;height:9.5px;background:#3a3a3a;"></div>
<svg class="a" style="left:669px;top:154px;" width="12" height="12" viewBox="0 0 12 12"><path d="M3,6H9" stroke="#e0e0e0" stroke-width="1.2"/><path d="M7.5,4L9.8,6L7.5,8Z" fill="#e0e0e0"/></svg>
<div class="a" style="left:669px;top:169.5px;width:13px;height:11px;background:#3a3a3a;"></div>
<svg class="a" style="left:669.5px;top:169px;" width="12" height="12" viewBox="0 0 12 12"><path d="M3.5,5A2.6,2.6 0 0 1 8.5,5M8.5,7A2.6,2.6 0 0 1 3.5,7" fill="none" stroke="#ddd" stroke-width="1"/></svg>
<div class="a" style="left:524px;top:186.5px;width:161px;height:1px;background:#262626;"></div>
<div class="a" style="left:525.5px;top:192px;width:40px;height:8px;background:#3c3c3c;border-radius:1px"></div>
<svg class="a" style="left:531.3px;top:191.66px;overflow:visible" width="28.700000000000045" height="8.68"><text x="0" y="6.541" textLength="28.700000000000045" lengthAdjust="spacingAndGlyphs" font-family="Liberation Sans" font-size="6.2" font-weight="bold" fill="#d0d0d0">PROFIL..</text></svg>
<svg class="a" style="left:584px;top:191.66px;overflow:visible" width="13" height="8.68"><text x="0" y="6.541" textLength="13" lengthAdjust="spacingAndGlyphs" font-family="Liberation Sans" font-size="6.2" font-weight="bold" fill="#b8b8b8">PR:</text></svg>
<div class="a" style="left:600px;top:192px;width:83.5px;height:8px;background:#565656;border:0.5px solid #2a2a2a;border-radius:1px"></div>
<div class="a" style="left:520px;top:206.5px;width:170px;height:9.8px;background:#303030;"></div>
<div class="a" style="left:530px;top:206.5px;width:23px;height:9.8px;background:#3e3e3e;"></div>
<svg class="a" style="left:532px;top:207.16px;overflow:visible" width="19.799999999999955" height="8.68"><text x="0" y="6.541" textLength="19.799999999999955" lengthAdjust="spacingAndGlyphs" font-family="Liberation Sans" font-size="6.2" font-weight="bold" fill="#f0f0f0">LAYR</text></svg>
<svg class="a" style="left:556.5px;top:207.16px;overflow:visible" width="9.5" height="8.68"><text x="0" y="6.541" textLength="9.5" lengthAdjust="spacingAndGlyphs" font-family="Liberation Sans" font-size="6.2" font-weight="bold" fill="#8e8e8e">EF</text></svg>
<svg class="a" style="left:574.8px;top:207.16px;overflow:visible" width="9.600000000000023" height="8.68"><text x="0" y="6.541" textLength="9.600000000000023" lengthAdjust="spacingAndGlyphs" font-family="Liberation Sans" font-size="6.2" font-weight="bold" fill="#8e8e8e">ST</text></svg>
<svg class="a" style="left:594px;top:207.16px;overflow:visible" width="10" height="8.68"><text x="0" y="6.541" textLength="10" lengthAdjust="spacingAndGlyphs" font-family="Liberation Sans" font-size="6.2" font-weight="bold" fill="#8e8e8e">TX</text></svg>
<svg class="a" style="left:608px;top:207.16px;overflow:visible" width="11.700000000000045" height="8.68"><text x="0" y="6.541" textLength="11.700000000000045" lengthAdjust="spacingAndGlyphs" font-family="Liberation Sans" font-size="6.2" font-weight="bold" fill="#8e8e8e">ST</text></svg>
<svg class="a" style="left:628.8px;top:207.16px;overflow:visible" width="9.200000000000045" height="8.68"><text x="0" y="6.541" textLength="9.200000000000045" lengthAdjust="spacingAndGlyphs" font-family="Liberation Sans" font-size="6.2" font-weight="bold" fill="#8e8e8e">DV</text></svg>
<svg class="a" style="left:647px;top:207.16px;overflow:visible" width="9.200000000000045" height="8.68"><text x="0" y="6.541" textLength="9.200000000000045" lengthAdjust="spacingAndGlyphs" font-family="Liberation Sans" font-size="6.2" font-weight="bold" fill="#8e8e8e">SN</text></svg>
<svg class="a" style="left:665.4px;top:207.16px;overflow:visible" width="10.399999999999977" height="8.68"><text x="0" y="6.541" textLength="10.399999999999977" lengthAdjust="spacingAndGlyphs" font-family="Liberation Sans" font-size="6.2" font-weight="bold" fill="#8e8e8e">HS</text></svg>
<div class="a" style="left:570px;top:208.5px;width:0.6px;height:6px;background:#4a4a4a;"></div>
<div class="a" style="left:589px;top:208.5px;width:0.6px;height:6px;background:#4a4a4a;"></div>
<div class="a" style="left:606px;top:208.5px;width:0.6px;height:6px;background:#4a4a4a;"></div>
<div class="a" style="left:624px;top:208.5px;width:0.6px;height:6px;background:#4a4a4a;"></div>
<div class="a" style="left:643px;top:208.5px;width:0.6px;height:6px;background:#4a4a4a;"></div>
<div class="a" style="left:661px;top:208.5px;width:0.6px;height:6px;background:#4a4a4a;"></div>
<div class="a" style="left:679px;top:208.5px;width:0.6px;height:6px;background:#4a4a4a;"></div>
<svg class="a" style="left:682px;top:207.5px;" width="8" height="8" viewBox="0 0 8 8"><rect x="0.5" y="1" width="5" height="5" fill="#ddd"/><circle cx="6.5" cy="6.5" r="0.8" fill="#aaa"/></svg>
<div class="a" style="left:520px;top:216.2px;width:170px;height:14px;background:#383838;"></div>
<svg class="a" style="left:524.4px;top:220.46px;overflow:visible" width="19.600000000000023" height="8.68"><text x="0" y="6.541" textLength="19.600000000000023" lengthAdjust="spacingAndGlyphs" font-family="Liberation Sans" font-size="6.2" font-weight="bold" fill="#a8a8a8">OPACT:</text></svg>
<div class="a" style="left:549px;top:218px;width:26px;height:11px;background:#353535;"></div>
<svg class="a" style="left:553px;top:220.25px;overflow:visible" width="15.700000000000045" height="9.1"><text x="0" y="6.8575" textLength="15.700000000000045" lengthAdjust="spacingAndGlyphs" font-family="Liberation Sans" font-size="6.5" font-weight="bold" fill="#e8e8e8">100 %</text></svg>
<svg class="a" style="left:571px;top:223px;" width="4" height="4" viewBox="0 0 4 4"><path d="M0.5,1L2,3L3.5,1Z" fill="#ccc"/></svg>
<div class="a" style="left:578px;top:218px;width:82px;height:11px;background:#3a3a3a;border-bottom:1px solid #4a4a4a"></div>
<svg class="a" style="left:580.5px;top:220.25px;overflow:visible" width="9.100000000000023" height="9.1"><text x="0" y="6.8575" textLength="9.100000000000023" lengthAdjust="spacingAndGlyphs" font-family="Liberation Sans" font-size="6.5" font-weight="bold" fill="#e8e8e8">NRM</text></svg>
<svg class="a" style="left:660.5px;top:220px;" width="5" height="9" viewBox="0 0 5 9"><path d="M0.8,3.5L2.5,1.5L4.2,3.5Z M0.8,5.5L2.5,7.5L4.2,5.5Z" fill="#bbb"/></svg>
<svg class="a" style="left:668.5px;top:220px;" width="10" height="10" viewBox="0 0 10 10"><circle cx="5" cy="5" r="3" fill="none" stroke="#e8e8e8" stroke-width="1.6"/></svg>
<svg class="a" style="left:679.5px;top:219.5px;" width="8" height="10" viewBox="0 0 8 10"><rect x="1.5" y="1.5" width="5" height="7" fill="#c8c8c8"/><rect x="2.5" y="4" width="3" height="1" fill="#555"/></svg>
<div class="a" style="left:520px;top:230.2px;width:170px;height:0.8px;background:#2a2a2a;"></div>
<div class="a" style="left:520px;top:231px;width:170px;height:135px;background:#2c2c2c;"></div>
<div class="a" style="left:521px;top:231.5px;width:163.5px;height:16.0px;background:#343434;"></div>
<div class="a" style="left:521px;top:246.7px;width:163.5px;height:0.8px;background:#2a2a2a;"></div>
<div class="a" style="left:532px;top:231.5px;width:15px;height:15.4px;background:#262626;border:0.8px solid #1c1c1c"></div>
<svg class="a" style="left:549.2px;top:235.16px;overflow:visible" width="18.799999999999955" height="8.68"><text x="0" y="6.541" textLength="18.799999999999955" lengthAdjust="spacingAndGlyphs" font-family="Liberation Sans" font-size="6.2" font-weight="normal" fill="#d0d0d0">[CRV]</text></svg>
<svg class="a" style="left:665.7px;top:235.5px;" width="8" height="8" viewBox="0 0 8 8"><path d="M2.5,6L6,2" stroke="#e8e8e8" stroke-width="1.2"/><circle cx="2.5" cy="6" r="0.9" fill="#e8e8e8"/></svg>
<div class="a" style="left:521px;top:247.5px;width:163.5px;height:16.69999999999999px;background:#5b84b6;"></div>
<div class="a" style="left:521px;top:263.4px;width:163.5px;height:0.8px;background:#1e3352;"></div>
<div class="a" style="left:532px;top:247.5px;width:15px;height:16.099999999999987px;background:#262626;border:0.8px solid #0c1624"></div>
<svg class="a" style="left:549.2px;top:251.51px;overflow:visible" width="18.799999999999955" height="8.68"><text x="0" y="6.541" textLength="18.799999999999955" lengthAdjust="spacingAndGlyphs" font-family="Liberation Sans" font-size="6.2" font-weight="normal" fill="#c4d4ea">[CRV]</text></svg>
<div class="a" style="left:665.9000000000001px;top:252.04999999999998px;width:7.6px;height:7.6px;border-radius:50%;background:#1d2a3c"></div>
<svg class="a" style="left:665.7px;top:251.85px;" width="8" height="8" viewBox="0 0 8 8"><path d="M2.5,6L6,2" stroke="#e8e8e8" stroke-width="1.2"/><circle cx="2.5" cy="6" r="0.9" fill="#e8e8e8"/></svg>
<div class="a" style="left:521px;top:264.2px;width:163.5px;height:15.800000000000011px;background:#5b84b6;"></div>
<div class="a" style="left:521px;top:279.2px;width:163.5px;height:0.8px;background:#1e3352;"></div>
<div class="a" style="left:532px;top:264.2px;width:15px;height:15.200000000000012px;background:#262626;border:0.8px solid #0c1624"></div>
<svg class="a" style="left:549.2px;top:267.76000000000005px;overflow:visible" width="18.799999999999955" height="8.68"><text x="0" y="6.541" textLength="18.799999999999955" lengthAdjust="spacingAndGlyphs" font-family="Liberation Sans" font-size="6.2" font-weight="normal" fill="#c4d4ea">[CRV]</text></svg>
<div class="a" style="left:665.9000000000001px;top:268.3px;width:7.6px;height:7.6px;border-radius:50%;background:#1d2a3c"></div>
<svg class="a" style="left:665.7px;top:268.1px;" width="8" height="8" viewBox="0 0 8 8"><path d="M2.5,6L6,2" stroke="#e8e8e8" stroke-width="1.2"/><circle cx="2.5" cy="6" r="0.9" fill="#e8e8e8"/></svg>
<div class="a" style="left:521px;top:280px;width:163.5px;height:16px;background:#343434;"></div>
<div class="a" style="left:521px;top:295.2px;width:163.5px;height:0.8px;background:#2a2a2a;"></div>
<div class="a" style="left:532px;top:280px;width:15px;height:15.4px;background:#262626;border:0.8px solid #1c1c1c"></div>
<svg class="a" style="left:549.2px;top:283.66px;overflow:visible" width="18.799999999999955" height="8.68"><text x="0" y="6.541" textLength="18.799999999999955" lengthAdjust="spacingAndGlyphs" font-family="Liberation Sans" font-size="6.2" font-weight="normal" fill="#d0d0d0">[CRV]</text></svg>
<svg class="a" style="left:665.7px;top:284.0px;" width="8" height="8" viewBox="0 0 8 8"><path d="M2.5,6L6,2" stroke="#e8e8e8" stroke-width="1.2"/><circle cx="2.5" cy="6" r="0.9" fill="#e8e8e8"/></svg>
<div class="a" style="left:684.5px;top:231px;width:5.5px;height:135px;background:#303030;"></div>
<div class="a" style="left:520px;top:366px;width:170px;height:12.5px;background:#383838;"></div>
<svg class="a" style="left:524px;top:367px;" width="12" height="10" viewBox="0 0 12 10"><path d="M6,1.5L10.5,3.5L6,5.5L1.5,3.5Z" fill="#bbb"/><path d="M1.5,5.2L6,7.2L10.5,5.2M1.5,7L6,9L10.5,7" fill="none" stroke="#999" stroke-width="0.8"/></svg>
<svg class="a" style="left:598px;top:367.5px;" width="10" height="10" viewBox="0 0 10 10"><rect x="1.5" y="1.5" width="7" height="7" fill="#ddd"/><rect x="3" y="3" width="4" height="4" fill="#3a3a3a"/></svg>
<svg class="a" style="left:609px;top:367.5px;" width="10" height="10" viewBox="0 0 10 10"><circle cx="5" cy="5" r="3.5" fill="none" stroke="#ccc" stroke-width="1"/><path d="M5,1.5A3.5,3.5 0 0 1 5,8.5Z" fill="#ccc"/></svg>
<svg class="a" style="left:620px;top:367.5px;" width="10" height="10" viewBox="0 0 10 10"><text x="5" y="8" font-size="7.5" font-style="italic" text-anchor="middle" fill="#aaa" font-family="Liberation Serif">fx</text></svg>
<svg class="a" style="left:655px;top:367.5px;" width="10" height="10" viewBox="0 0 10 10"><path d="M2.5,1.5H6L8,3.5V8.5H2.5Z" fill="none" stroke="#ccc" stroke-width="0.9"/></svg>
<svg class="a" style="left:667px;top:367.5px;" width="10" height="10" viewBox="0 0 10 10"><rect x="1.5" y="1.5" width="7" height="7" fill="#aaa"/><path d="M4,1.5V8.5M6,1.5V8.5" stroke="#383838" stroke-width="0.7"/></svg>
<svg class="a" style="left:678px;top:367.5px;" width="10" height="10" viewBox="0 0 10 10"><rect x="2.5" y="2.5" width="5" height="6.5" fill="#aaa"/><rect x="1.5" y="1.5" width="7" height="1" fill="#bbb"/></svg>
<div class="a" style="left:520px;top:378.5px;width:170px;height:11.3px;background:#2d2d2d;"></div>
<div class="a" style="left:532px;top:379px;width:10.5px;height:10.5px;background:#3e3e3e;"></div>
<svg class="a" style="left:533.3px;top:379.96000000000004px;overflow:visible" width="8.400000000000091" height="8.68"><text x="0" y="6.541" textLength="8.400000000000091" lengthAdjust="spacingAndGlyphs" font-family="Liberation Sans" font-size="6.2" font-weight="bold" fill="#f0f0f0">XF</text></svg>
<svg class="a" style="left:547px;top:379.96000000000004px;overflow:visible" width="9.700000000000045" height="8.68"><text x="0" y="6.541" textLength="9.700000000000045" lengthAdjust="spacingAndGlyphs" font-family="Liberation Sans" font-size="6.2" font-weight="bold" fill="#8e8e8e">HS</text></svg>
<div class="a" style="left:559.5px;top:381.5px;width:0.6px;height:6px;background:#555;"></div>
<svg class="a" style="left:562px;top:379.96000000000004px;overflow:visible" width="24" height="8.68"><text x="0" y="6.541" textLength="24" lengthAdjust="spacingAndGlyphs" font-family="Liberation Sans" font-size="6.2" font-weight="bold" fill="#8e8e8e">NAVIG</text></svg>
<div class="a" style="left:521px;top:389.8px;width:169px;height:50.2px;background:#393939;"></div>
<div class="a" style="left:532px;top:401px;width:16.5px;height:16.5px;background:#5e5e5e;"></div>
<div class="a" style="left:528.5px;top:398.5px;width:5px;height:5px;background:#f4f4f4;border-radius:0.5px"></div>
<div class="a" style="left:537.8px;top:399.3px;width:3.4px;height:3.4px;background:#9c9c9c;border-radius:1px"></div>
<div class="a" style="left:546.3px;top:399.3px;width:3.4px;height:3.4px;background:#9c9c9c;border-radius:1px"></div>
<div class="a" style="left:529.3px;top:407.5px;width:3.4px;height:3.4px;background:#9c9c9c;border-radius:1px"></div>
<div class="a" style="left:537.8px;top:407.5px;width:3.4px;height:3.4px;background:#9c9c9c;border-radius:1px"></div>
<div class="a" style="left:546.3px;top:407.5px;width:3.4px;height:3.4px;background:#9c9c9c;border-radius:1px"></div>
<div class="a" style="left:529.3px;top:415.7px;width:3.4px;height:3.4px;background:#9c9c9c;border-radius:1px"></div>
<div class="a" style="left:537.8px;top:415.7px;width:3.4px;height:3.4px;background:#9c9c9c;border-radius:1px"></div>
<div class="a" style="left:546.3px;top:415.7px;width:3.4px;height:3.4px;background:#9c9c9c;border-radius:1px"></div>
<svg class="a" style="left:558.7px;top:396.26000000000005px;overflow:visible" width="3.2999999999999545" height="8.68"><text x="0" y="6.541" textLength="3.2999999999999545" lengthAdjust="spacingAndGlyphs" font-family="Liberation Sans" font-size="6.2" font-weight="bold" fill="#b0b0b0">X:</text></svg>
<div class="a" style="left:565.2px;top:396.3px;width:29.3px;height:8.6px;background:#282828;border-radius:1px"></div>
<svg class="a" style="left:566.5px;top:396.05px;overflow:visible" width="18.899999999999977" height="9.1"><text x="0" y="6.8575" textLength="18.899999999999977" lengthAdjust="spacingAndGlyphs" font-family="Liberation Sans" font-size="6.5" font-weight="bold" fill="#ececec">960 px</text></svg>
<svg class="a" style="left:558.7px;top:406.66px;overflow:visible" width="3.2999999999999545" height="8.68"><text x="0" y="6.541" textLength="3.2999999999999545" lengthAdjust="spacingAndGlyphs" font-family="Liberation Sans" font-size="6.2" font-weight="bold" fill="#b0b0b0">Y:</text></svg>
<div class="a" style="left:565.2px;top:406.7px;width:29.3px;height:8.6px;background:#282828;border-radius:1px"></div>
<svg class="a" style="left:566.5px;top:406.45px;overflow:visible" width="20.5" height="9.1"><text x="0" y="6.8575" textLength="20.5" lengthAdjust="spacingAndGlyphs" font-family="Liberation Sans" font-size="6.5" font-weight="bold" fill="#ececec">511.2 px</text></svg>
<svg class="a" style="left:558px;top:422.66px;overflow:visible" width="5" height="8.68"><text x="0" y="6.541" textLength="5" lengthAdjust="spacingAndGlyphs" font-family="Liberation Sans" font-size="6.2" font-weight="bold" fill="#b0b0b0">R:</text></svg>
<div class="a" style="left:565.2px;top:422.7px;width:29.3px;height:8.6px;background:#282828;border-radius:1px"></div>
<svg class="a" style="left:566.5px;top:422.45px;overflow:visible" width="7.5" height="9.1"><text x="0" y="6.8575" textLength="7.5" lengthAdjust="spacingAndGlyphs" font-family="Liberation Sans" font-size="6.5" font-weight="bold" fill="#ececec">0 °</text></svg>
<svg class="a" style="left:590px;top:425px;" width="4" height="4" viewBox="0 0 4 4"><path d="M0.5,1L2,3L3.5,1Z" fill="#bbb"/></svg>
<svg class="a" style="left:600.5px;top:396.26000000000005px;overflow:visible" width="4.5" height="8.68"><text x="0" y="6.541" textLength="4.5" lengthAdjust="spacingAndGlyphs" font-family="Liberation Sans" font-size="6.2" font-weight="bold" fill="#b0b0b0">W:</text></svg>
<div class="a" style="left:607px;top:396.3px;width:29.5px;height:8.6px;background:#282828;border-radius:1px"></div>
<svg class="a" style="left:608.5px;top:396.05px;overflow:visible" width="23.5" height="9.1"><text x="0" y="6.8575" textLength="23.5" lengthAdjust="spacingAndGlyphs" font-family="Liberation Sans" font-size="6.5" font-weight="bold" fill="#ececec">384.8 px</text></svg>
<svg class="a" style="left:600.5px;top:406.66px;overflow:visible" width="4.5" height="8.68"><text x="0" y="6.541" textLength="4.5" lengthAdjust="spacingAndGlyphs" font-family="Liberation Sans" font-size="6.2" font-weight="bold" fill="#b0b0b0">H:</text></svg>
<div class="a" style="left:607px;top:406.7px;width:29.5px;height:8.6px;background:#282828;border-radius:1px"></div>
<svg class="a" style="left:608.5px;top:406.45px;overflow:visible" width="23.5" height="9.1"><text x="0" y="6.8575" textLength="23.5" lengthAdjust="spacingAndGlyphs" font-family="Liberation Sans" font-size="6.5" font-weight="bold" fill="#ececec">349.3 px</text></svg>
<svg class="a" style="left:600.5px;top:422.66px;overflow:visible" width="4.5" height="8.68"><text x="0" y="6.541" textLength="4.5" lengthAdjust="spacingAndGlyphs" font-family="Liberation Sans" font-size="6.2" font-weight="bold" fill="#b0b0b0">S:</text></svg>
<div class="a" style="left:607px;top:422.7px;width:29.5px;height:8.6px;background:#282828;border-radius:1px"></div>
<svg class="a" style="left:608.5px;top:422.45px;overflow:visible" width="7.5" height="9.1"><text x="0" y="6.8575" textLength="7.5" lengthAdjust="spacingAndGlyphs" font-family="Liberation Sans" font-size="6.5" font-weight="bold" fill="#ececec">0 °</text></svg>
<svg class="a" style="left:632px;top:425px;" width="4" height="4" viewBox="0 0 4 4"><path d="M0.5,1L2,3L3.5,1Z" fill="#bbb"/></svg>
<div class="a" style="left:642px;top:401px;width:2.5px;height:7px;background:#5a5a5a;border-radius:1px"></div>
<div class="a" style="left:0px;top:440px;width:690px;height:10px;background:#303030;"></div>
<svg class="a" style="left:8.7px;top:440.8px;overflow:visible" width="94.3" height="8.399999999999999"><text x="0" y="6.329999999999999" textLength="94.3" lengthAdjust="spacingAndGlyphs" font-family="Liberation Sans" font-size="6" font-weight="normal" fill="#a8a8a8">2 objects selected in document.</text></svg>
<svg class="a" style="left:107.2px;top:440.8px;overflow:visible" width="17.39999999999999" height="8.399999999999999"><text x="0" y="6.329999999999999" textLength="17.39999999999999" lengthAdjust="spacingAndGlyphs" font-family="Liberation Sans" font-size="6" font-weight="bold" fill="#f0f0f0">DRAG</text></svg>
<svg class="a" style="left:125.2px;top:440.8px;overflow:visible" width="57.39999999999999" height="8.399999999999999"><text x="0" y="6.329999999999999" textLength="57.39999999999999" lengthAdjust="spacingAndGlyphs" font-family="Liberation Sans" font-size="6" font-weight="normal" fill="#a8a8a8">to move selection.</text></svg>
<svg class="a" style="left:187.2px;top:440.8px;overflow:visible" width="20.30000000000001" height="8.399999999999999"><text x="0" y="6.329999999999999" textLength="20.30000000000001" lengthAdjust="spacingAndGlyphs" font-family="Liberation Sans" font-size="6" font-weight="bold" fill="#f0f0f0">CLICK</text></svg>
<svg class="a" style="left:207.5px;top:440.8px;overflow:visible" width="116.0" height="8.399999999999999"><text x="0" y="6.329999999999999" textLength="116.0" lengthAdjust="spacingAndGlyphs" font-family="Liberation Sans" font-size="6" font-weight="normal" fill="#a8a8a8">to select other object. Nothing area</text></svg>
<svg class="a" style="left:325px;top:440.8px;overflow:visible" width="18.80000000000001" height="8.399999999999999"><text x="0" y="6.329999999999999" textLength="18.80000000000001" lengthAdjust="spacingAndGlyphs" font-family="Liberation Sans" font-size="6" font-weight="bold" fill="#f0f0f0">CLICK</text></svg>
<svg class="a" style="left:343.8px;top:440.8px;overflow:visible" width="70.19999999999999" height="8.399999999999999"><text x="0" y="6.329999999999999" textLength="70.19999999999999" lengthAdjust="spacingAndGlyphs" font-family="Liberation Sans" font-size="6" font-weight="normal" fill="#a8a8a8">to deselect all items.</text></svg>
<svg class="a" style="left:0px;top:0px;" width="4" height="4" viewBox="0 0 4 4"><path d="M0,0H4A4,4 0 0 0 0,4Z" fill="#0a0a0a"/></svg>
<svg class="a" style="left:686px;top:0px;" width="4" height="4" viewBox="0 0 4 4"><path d="M4,0H0A4,4 0 0 1 4,4Z" fill="#0a0a0a"/></svg>
<svg class="a" style="left:0px;top:446px;" width="4" height="4" viewBox="0 0 4 4"><path d="M0,4H4A4,4 0 0 1 0,0Z" fill="#0a0a0a"/></svg>
<svg class="a" style="left:686px;top:446px;" width="4" height="4" viewBox="0 0 4 4"><path d="M4,4H0A4,4 0 0 0 4,0Z" fill="#0a0a0a"/></svg>
</div></body></html>
